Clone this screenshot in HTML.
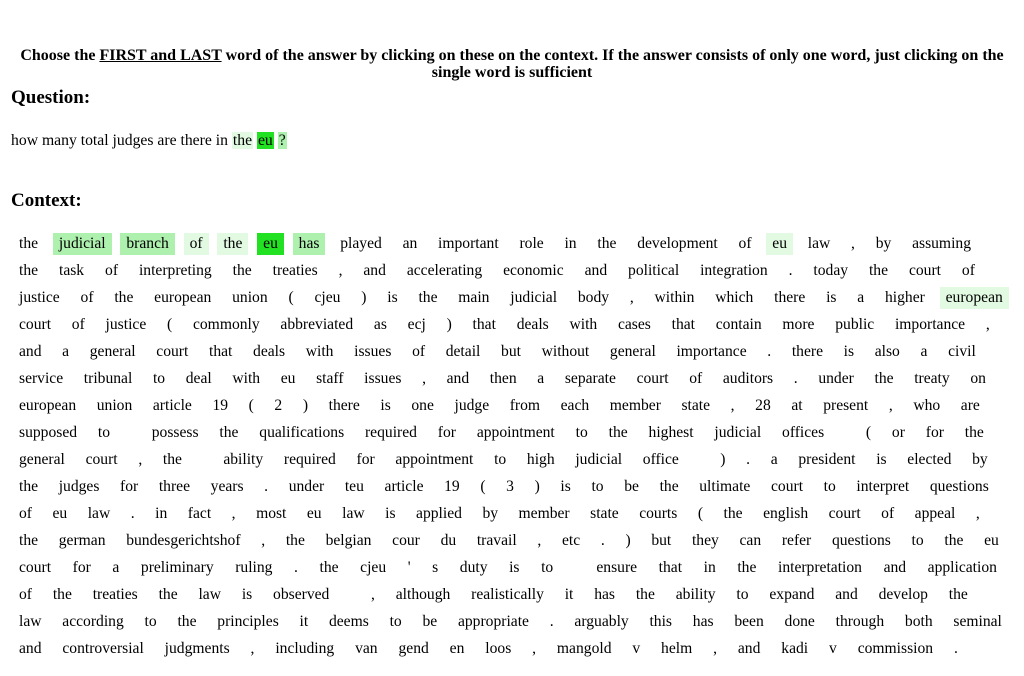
<!DOCTYPE html>
<html><head><meta charset="utf-8"><style>
body{margin:0;width:1024px;height:676px;background:#fff;font-family:"Liberation Serif",serif;color:#000;position:relative;overflow:hidden}
.h{position:absolute;left:0;width:1024px;text-align:center;font-weight:bold;font-size:16px;line-height:17px;top:47px}
.h2{position:absolute;left:11px;font-weight:bold;font-size:19px}
.q{position:absolute;left:11px;top:131px;font-size:15.7px;line-height:20px}
.q span{padding:0 1px}
.l{position:absolute;left:13px;display:flex;justify-content:space-between;font-size:15.6px;height:22px;line-height:22px}
.l span{padding:0 6px;display:block}
.a{background:#e2fae2}.b{background:#aef0ae}.c{background:#22e022}
</style></head><body>
<div class="h">Choose the <u>FIRST and LAST</u> word of the answer by clicking on these on the context. If the answer consists of only one word, just clicking on the<br>single word is sufficient</div>
<div class="h2" style="top:87px">Question:</div>
<div class="q">how many total judges are there in <span class="a">the</span> <span class="c">eu</span> <span class="b">?</span></div>
<div class="h2" style="top:190px">Context:</div>

<div class="l" style="top:233px;width:964px"><span>the</span><span class="b">judicial</span><span class="b">branch</span><span class="a">of</span><span class="a">the</span><span class="c">eu</span><span class="b">has</span><span>played</span><span>an</span><span>important</span><span>role</span><span>in</span><span>the</span><span>development</span><span>of</span><span class="a">eu</span><span>law</span><span>,</span><span>by</span><span>assuming</span></div>
<div class="l" style="top:260px;width:968px"><span>the</span><span>task</span><span>of</span><span>interpreting</span><span>the</span><span>treaties</span><span>,</span><span>and</span><span>accelerating</span><span>economic</span><span>and</span><span>political</span><span>integration</span><span>.</span><span>today</span><span>the</span><span>court</span><span>of</span></div>
<div class="l" style="top:287px;width:996px"><span>justice</span><span>of</span><span>the</span><span>european</span><span>union</span><span>(</span><span>cjeu</span><span>)</span><span>is</span><span>the</span><span>main</span><span>judicial</span><span>body</span><span>,</span><span>within</span><span>which</span><span>there</span><span>is</span><span>a</span><span>higher</span><span class="a">european</span></div>
<div class="l" style="top:314px;width:983px"><span>court</span><span>of</span><span>justice</span><span>(</span><span>commonly</span><span>abbreviated</span><span>as</span><span>ecj</span><span>)</span><span>that</span><span>deals</span><span>with</span><span>cases</span><span>that</span><span>contain</span><span>more</span><span>public</span><span>importance</span><span>,</span></div>
<div class="l" style="top:341px;width:969px"><span>and</span><span>a</span><span>general</span><span>court</span><span>that</span><span>deals</span><span>with</span><span>issues</span><span>of</span><span>detail</span><span>but</span><span>without</span><span>general</span><span>importance</span><span>.</span><span>there</span><span>is</span><span>also</span><span>a</span><span>civil</span></div>
<div class="l" style="top:368px;width:979px"><span>service</span><span>tribunal</span><span>to</span><span>deal</span><span>with</span><span>eu</span><span>staff</span><span>issues</span><span>,</span><span>and</span><span>then</span><span>a</span><span>separate</span><span>court</span><span>of</span><span>auditors</span><span>.</span><span>under</span><span>the</span><span>treaty</span><span>on</span></div>
<div class="l" style="top:395px;width:973px"><span>european</span><span>union</span><span>article</span><span>19</span><span>(</span><span>2</span><span>)</span><span>there</span><span>is</span><span>one</span><span>judge</span><span>from</span><span>each</span><span>member</span><span>state</span><span>,</span><span>28</span><span>at</span><span>present</span><span>,</span><span>who</span><span>are</span></div>
<div class="l" style="top:422px;width:977px"><span>supposed</span><span>to</span><span></span><span>possess</span><span>the</span><span>qualifications</span><span>required</span><span>for</span><span>appointment</span><span>to</span><span>the</span><span>highest</span><span>judicial</span><span>offices</span><span></span><span>(</span><span>or</span><span>for</span><span>the</span></div>
<div class="l" style="top:449px;width:981px"><span>general</span><span>court</span><span>,</span><span>the</span><span></span><span>ability</span><span>required</span><span>for</span><span>appointment</span><span>to</span><span>high</span><span>judicial</span><span>office</span><span></span><span>)</span><span>.</span><span>a</span><span>president</span><span>is</span><span>elected</span><span>by</span></div>
<div class="l" style="top:476px;width:982px"><span>the</span><span>judges</span><span>for</span><span>three</span><span>years</span><span>.</span><span>under</span><span>teu</span><span>article</span><span>19</span><span>(</span><span>3</span><span>)</span><span>is</span><span>to</span><span>be</span><span>the</span><span>ultimate</span><span>court</span><span>to</span><span>interpret</span><span>questions</span></div>
<div class="l" style="top:503px;width:973px"><span>of</span><span>eu</span><span>law</span><span>.</span><span>in</span><span>fact</span><span>,</span><span>most</span><span>eu</span><span>law</span><span>is</span><span>applied</span><span>by</span><span>member</span><span>state</span><span>courts</span><span>(</span><span>the</span><span>english</span><span>court</span><span>of</span><span>appeal</span><span>,</span></div>
<div class="l" style="top:530px;width:992px"><span>the</span><span>german</span><span>bundesgerichtshof</span><span>,</span><span>the</span><span>belgian</span><span>cour</span><span>du</span><span>travail</span><span>,</span><span>etc</span><span>.</span><span>)</span><span>but</span><span>they</span><span>can</span><span>refer</span><span>questions</span><span>to</span><span>the</span><span>eu</span></div>
<div class="l" style="top:557px;width:990px"><span>court</span><span>for</span><span>a</span><span>preliminary</span><span>ruling</span><span>.</span><span>the</span><span>cjeu</span><span>'</span><span>s</span><span>duty</span><span>is</span><span>to</span><span></span><span>ensure</span><span>that</span><span>in</span><span>the</span><span>interpretation</span><span>and</span><span>application</span></div>
<div class="l" style="top:584px;width:961px"><span>of</span><span>the</span><span>treaties</span><span>the</span><span>law</span><span>is</span><span>observed</span><span></span><span>,</span><span>although</span><span>realistically</span><span>it</span><span>has</span><span>the</span><span>ability</span><span>to</span><span>expand</span><span>and</span><span>develop</span><span>the</span></div>
<div class="l" style="top:611px;width:995px"><span>law</span><span>according</span><span>to</span><span>the</span><span>principles</span><span>it</span><span>deems</span><span>to</span><span>be</span><span>appropriate</span><span>.</span><span>arguably</span><span>this</span><span>has</span><span>been</span><span>done</span><span>through</span><span>both</span><span>seminal</span></div>
<div class="l" style="top:638px;width:951px"><span>and</span><span>controversial</span><span>judgments</span><span>,</span><span>including</span><span>van</span><span>gend</span><span>en</span><span>loos</span><span>,</span><span>mangold</span><span>v</span><span>helm</span><span>,</span><span>and</span><span>kadi</span><span>v</span><span>commission</span><span>.</span></div>
</body></html>
